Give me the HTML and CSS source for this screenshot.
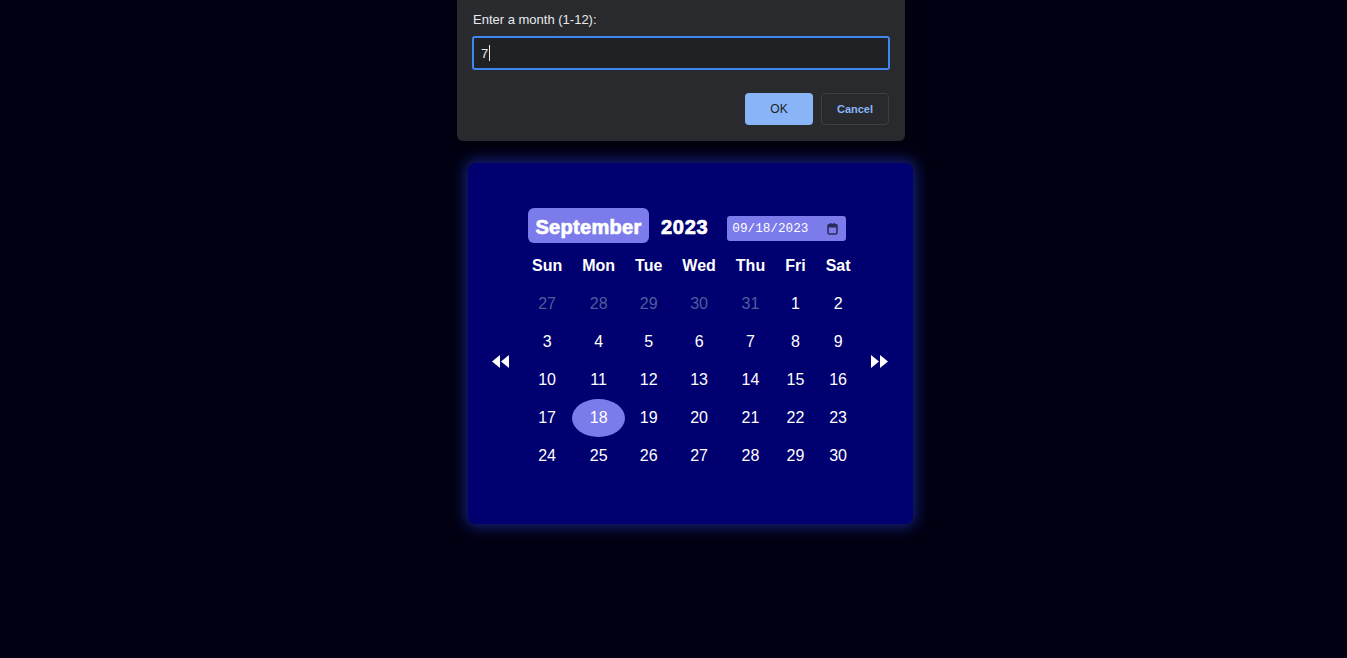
FILE: index.html
```html
<!DOCTYPE html>
<html lang="en">
<head>
<meta charset="utf-8">
<title>Calendar</title>
<link rel="stylesheet" href="styles.css">
</head>
<body>
<main class="page">
  <section class="card">
    <div class="cal-header">
      <button class="month-btn">September</button>
      <span class="year">2023</span>
      <div class="date-field">
        <span class="date-text">09/18/2023</span>
        <svg class="cal-icon" width="11" height="12" viewBox="0 0 11 12"><rect x="1" y="1.5" width="9" height="9.5" rx="1.5" fill="none" stroke="#2c2c5c" stroke-width="1.6"/><rect x="1" y="1.5" width="9" height="3" fill="#2c2c5c"/><rect x="3" y="0" width="1.4" height="2.5" fill="#2c2c5c"/><rect x="6.6" y="0" width="1.4" height="2.5" fill="#2c2c5c"/></svg>
      </div>
    </div>
    <div class="cal-body">
      <button class="nav prev" aria-label="Previous month">
        <svg width="18" height="13" viewBox="0 0 18 13"><polygon points="0,6.5 8,0 8,13" fill="#fff"/><polygon points="9,6.5 17,0 17,13" fill="#fff"/></svg>
      </button>
      <table class="days">
        <thead>
          <tr><th>Sun</th><th>Mon</th><th>Tue</th><th>Wed</th><th>Thu</th><th>Fri</th><th>Sat</th></tr>
        </thead>
        <tbody>
          <tr><td class="muted">27</td><td class="muted">28</td><td class="muted">29</td><td class="muted">30</td><td class="muted">31</td><td>1</td><td>2</td></tr>
          <tr><td>3</td><td>4</td><td>5</td><td>6</td><td>7</td><td>8</td><td>9</td></tr>
          <tr><td>10</td><td>11</td><td>12</td><td>13</td><td>14</td><td>15</td><td>16</td></tr>
          <tr><td>17</td><td class="selected">18</td><td>19</td><td>20</td><td>21</td><td>22</td><td>23</td></tr>
          <tr><td>24</td><td>25</td><td>26</td><td>27</td><td>28</td><td>29</td><td>30</td></tr>
        </tbody>
      </table>
      <button class="nav next" aria-label="Next month">
        <svg width="18" height="13" viewBox="0 0 18 13"><polygon points="1,0 9,6.5 1,13" fill="#fff"/><polygon points="10,0 18,6.5 10,13" fill="#fff"/></svg>
      </button>
    </div>
  </section>
</main>

<div class="dialog" role="dialog">
  <label class="dialog-label">Enter a month (1-12):</label>
  <div class="dialog-input"><span class="typed">7</span><span class="caret"></span></div>
  <div class="dialog-actions">
    <button class="btn ok">OK</button>
    <button class="btn cancel">Cancel</button>
  </div>
</div>
</body>
</html>
```

FILE: styles.css
```css
* { box-sizing: border-box; }

html, body {
  margin: 0;
  padding: 0;
  background: #000012;
  height: 100%;
}

body {
  font-family: "Liberation Sans", Arial, sans-serif;
  color: #fff;
  overflow: hidden;
}

.page {
  padding: 163px 0 0 468px;
}

.card {
  width: 445px;
  height: 361px;
  background: #000070;
  border-radius: 8px;
  box-shadow: 0 0 14px 3px rgba(40, 60, 210, 0.55);
  padding-top: 45px;
}

.cal-header {
  display: flex;
  align-items: flex-start;
  padding-left: 60px;
  height: 35px;
}

.month-btn {
  width: 121px;
  height: 35px;
  border: none;
  border-radius: 6px;
  background: #7b7beb;
  color: #fff;
  font-family: "Liberation Sans", Arial, sans-serif;
  font-size: 20px;
  font-weight: 700;
  letter-spacing: 0.3px;
  -webkit-text-stroke: 0.7px #fff;
  padding: 3px 0 0 0;
  margin: 0;
}

.year {
  margin-left: 12px;
  margin-top: 8px;
  font-size: 20px;
  font-weight: 700;
  line-height: 22px;
  letter-spacing: 0.7px;
  -webkit-text-stroke: 0.7px #fff;
}

.date-field {
  margin-left: 19px;
  margin-top: 8px;
  width: 119px;
  height: 25px;
  background: #7b7beb;
  border-radius: 3px;
  display: flex;
  align-items: center;
  padding: 0 8px 0 5px;
  justify-content: space-between;
}

.date-text {
  font-family: "Liberation Mono", "DejaVu Sans Mono", monospace;
  font-size: 12.7px;
  color: #fff;
}

.cal-icon { display: block; }

.cal-body {
  display: flex;
  align-items: center;
  padding-left: 24px;
  margin-top: 4px;
}

.nav {
  background: none;
  border: none;
  padding: 0;
  margin: 0;
  width: 18px;
  height: 13px;
  display: flex;
}

.nav.prev { margin-right: 12px; }
.nav.next { margin-left: 9px; }

.days {
  border-collapse: collapse;
  border-spacing: 0;
}

.days th,
.days td {
  padding: 10px;
  height: 38px;
  text-align: center;
  font-size: 16px;
  line-height: 18px;
  color: #fff;
  white-space: nowrap;
}

.days th { font-weight: 700; }

.days td.muted { color: #4f5c9c; }

.days td.selected {
  background: #7b7beb;
  border-radius: 50%;
}

/* prompt dialog */
.dialog {
  position: absolute;
  left: 457px;
  top: 0;
  width: 448px;
  height: 141px;
  background: #292a2d;
  border-radius: 0 0 6px 6px;
  box-shadow: 0 2px 8px rgba(0, 0, 0, 0.5);
  padding: 12px 16px 0 16px;
  font-family: "Liberation Sans", Arial, sans-serif;
}

.dialog-label {
  display: block;
  font-size: 13px;
  line-height: 15px;
  color: #e8eaed;
}

.dialog-input {
  margin-top: 9px;
  margin-left: -1px;
  width: 418px;
  height: 34px;
  border: 2px solid #3f86f0;
  border-radius: 3px;
  background: #202124;
  display: flex;
  align-items: center;
  padding-left: 7px;
}

.typed {
  font-size: 13px;
  color: #e8eaed;
}

.caret {
  display: inline-block;
  width: 1px;
  height: 16px;
  background: #e8eaed;
  margin-left: 1px;
}

.dialog-actions {
  display: flex;
  justify-content: flex-end;
  gap: 8px;
  margin-top: 23px;
  padding-right: 0;
}

.btn {
  width: 68px;
  height: 32px;
  border-radius: 4px;
  font-family: "Liberation Sans", Arial, sans-serif;
  padding: 0;
}

.btn.ok {
  background: #8ab4f8;
  border: none;
  color: #202124;
  font-size: 12px;
}

.btn.cancel {
  background: transparent;
  border: 1px solid #3c4043;
  color: #8ab4f8;
  font-size: 11px;
  font-weight: 700;
}
```
